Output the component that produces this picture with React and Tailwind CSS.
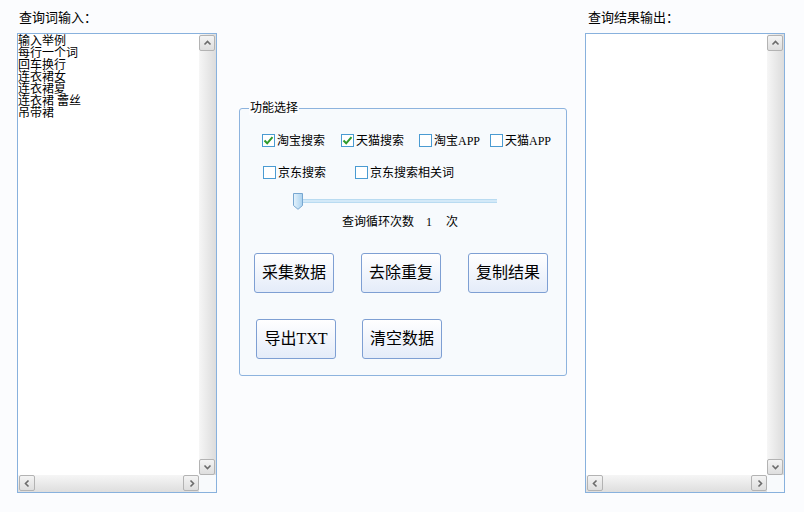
import React from "react";

const FONT = "font-['Liberation_Serif','Noto_Sans_CJK_SC',sans-serif]";

function Chevron({ dir }) {
  const paths = {
    up: "M1.5 5.5 L4.5 2.5 L7.5 5.5",
    down: "M1.5 2.5 L4.5 5.5 L7.5 2.5",
    left: "M5.5 1.5 L2.5 4.5 L5.5 7.5",
    right: "M3.5 1.5 L6.5 4.5 L3.5 7.5",
  };
  return (
    <svg width="9" height="9" viewBox="0 0 9 9">
      <path d={paths[dir]} fill="none" stroke="#6b6b6b" strokeWidth="1.6" />
    </svg>
  );
}

function SBtn({ dir }) {
  return (
    <div className="w-[16px] h-[16px] border border-[#b3b3b3] rounded-[2px] bg-linear-to-b from-[#f4f4f4] to-[#dedede] flex items-center justify-center">
      <Chevron dir={dir} />
    </div>
  );
}

function TextBox({ lines }) {
  return (
    <div className="w-[200px] h-[460px] border border-[#88b1dd] bg-white grid grid-cols-[181px_17px] grid-rows-[441px_17px]">
      <div className="overflow-hidden pt-[1px] text-[12px] leading-[12px] text-black">
        {lines.map((l, i) => (
          <div key={i} className="whitespace-pre">{l}</div>
        ))}
      </div>
      <div className="pt-[1px] flex flex-col justify-between bg-linear-to-r from-[#f6f6f6] to-[#dcdcdc]">
        <SBtn dir="up" />
        <SBtn dir="down" />
      </div>
      <div className="pl-[1px] flex justify-between bg-linear-to-b from-[#f6f6f6] to-[#dedede]">
        <SBtn dir="left" />
        <SBtn dir="right" />
      </div>
      <div className="bg-[#f8fafc]" />
    </div>
  );
}

function Check({ checked, label, w }) {
  return (
    <div className={`flex items-center h-[13px] ${w}`}>
      <div className="w-[13px] h-[13px] border border-[#4a9bd2] bg-white flex items-center justify-center shrink-0">
        {checked && (
          <svg width="11" height="11" viewBox="0 0 11 11">
            <path d="M1.5 5.5 L4.2 8.3 L9.5 2.2" fill="none" stroke="#2f9a2c" strokeWidth="2" />
          </svg>
        )}
      </div>
      <span className="ml-[2px] text-[12px] leading-[12px] whitespace-nowrap">{label}</span>
    </div>
  );
}

function Btn({ children }) {
  return (
    <div className="w-[80px] h-[40px] border border-[#7e9fd3] rounded-[3px] bg-linear-to-b from-[#ffffff] to-[#e4ecf9] flex items-center justify-center text-[16px] leading-[16px] text-black">
      {children}
    </div>
  );
}

export default function App() {
  return (
    <div className={`w-[804px] h-[512px] bg-[#fbfcfe] flex pl-[17px] text-black ${FONT}`}>
      <div className="w-[200px] flex flex-col">
        <div className="h-[33px] pt-[11px] pl-[2px] text-[13px] leading-[14px]">查询词输入：</div>
        <TextBox lines={["输入举例", "每行一个词", "回车换行", "连衣裙女", "连衣裙夏", "连衣裙 蕾丝", "吊带裙"]} />
      </div>

      <div className="ml-[22px] mt-[108px] w-[328px] h-[268px] border border-[#8db3de] rounded-[3px] bg-[#f7fafd] relative">
        <div className="absolute -top-[8px] left-[9px] px-[1px] bg-[#fbfcfe] text-[12px] leading-[14px]">功能选择</div>
        <div className="pt-[25px] pl-[22px] flex">
          <Check checked label="淘宝搜索" w="w-[79px]" />
          <Check checked label="天猫搜索" w="w-[78px]" />
          <Check label="淘宝APP" w="w-[71px]" />
          <Check label="天猫APP" w="" />
        </div>
        <div className="mt-[19px] pl-[23px] flex">
          <Check label="京东搜索" w="w-[92px]" />
          <Check label="京东搜索相关词" w="" />
        </div>
        <div className="mt-[14px] ml-[53px] w-[204px] h-[17px] relative">
          <div className="absolute left-[2px] top-[6px] w-[202px] h-[4px] bg-[#d3e9f8] border-y border-[#b9dbf1]" />
          <svg className="absolute left-0 top-0" width="11" height="17" viewBox="0 0 11 17">
            <defs>
              <linearGradient id="th" x1="0" y1="0" x2="1" y2="0">
                <stop offset="0" stopColor="#e6f3fc" />
                <stop offset="1" stopColor="#a9d1ef" />
              </linearGradient>
            </defs>
            <path d="M0.5 0.5 H9.5 V12.5 L5 16.3 L0.5 12.5 Z" fill="url(#th)" stroke="#78a7d1" />
          </svg>
        </div>
        <div className="mt-[6px] ml-[102px] flex text-[12px] leading-[12px]">
          <span>查询循环次数</span>
          <span className="ml-[12px]">1</span>
          <span className="ml-[14px]">次</span>
        </div>
        <div className="mt-[25px] ml-[14px] flex gap-[27px]">
          <Btn>采集数据</Btn>
          <Btn>去除重复</Btn>
          <Btn>复制结果</Btn>
        </div>
        <div className="mt-[26px] ml-[16px] flex gap-[26px]">
          <Btn>导出TXT</Btn>
          <Btn>清空数据</Btn>
        </div>
      </div>

      <div className="ml-[18px] w-[200px] flex flex-col">
        <div className="h-[33px] pt-[11px] pl-[3px] text-[13px] leading-[14px]">查询结果输出：</div>
        <TextBox lines={[]} />
      </div>
    </div>
  );
}
